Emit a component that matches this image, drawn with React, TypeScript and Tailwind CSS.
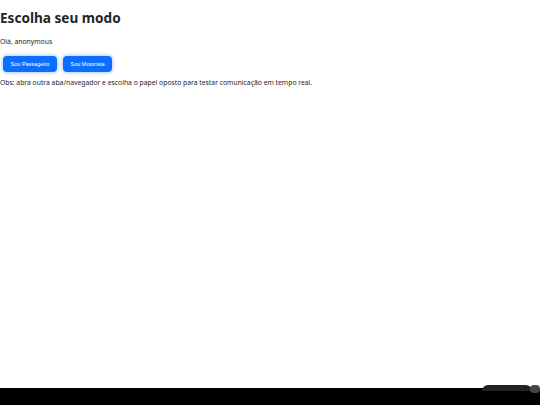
export default function App() {
  return (
    <div className="relative w-[540px] h-[405px] bg-white overflow-hidden font-['Noto_Sans',sans-serif] text-[#212529]">
      <h1 className="text-[13.6px] font-bold leading-none pt-[11px]">Escolha seu modo</h1>
      <p className="text-[6.8px] leading-none mt-[14px]">Olá, anonymous</p>
      <div className="flex gap-[6px] mt-[11px] ml-[3px]">
        <button className="h-[16px] w-[54px] rounded-[4px] bg-[#0d6efd] text-white text-[5.5px] font-['Liberation_Sans',sans-serif] shadow-[0_0_4px_rgba(13,110,253,0.5)]">
          Sou Passageiro
        </button>
        <button className="h-[16px] w-[49px] rounded-[4px] bg-[#0d6efd] text-white text-[5.5px] font-['Liberation_Sans',sans-serif] shadow-[0_0_4px_rgba(13,110,253,0.5)]">
          Sou Motorista
        </button>
      </div>
      <p className="text-[6.8px] leading-none mt-[8px]">
        Obs: abra outra aba/navegador e escolha o papel oposto para testar comunicação em tempo real.
      </p>
      {/* bottom bar + floating widget */}
      <div className="absolute left-0 right-0 bottom-0 h-[17px] bg-black" />
      <div className="absolute right-[8px] bottom-[14px] w-[50px] h-[6px] rounded-t-[6px] bg-[#222]" />
      <div className="absolute right-0 bottom-[12px] w-[10px] h-[8px] rounded-full bg-[#444]" />
    </div>
  )
}
